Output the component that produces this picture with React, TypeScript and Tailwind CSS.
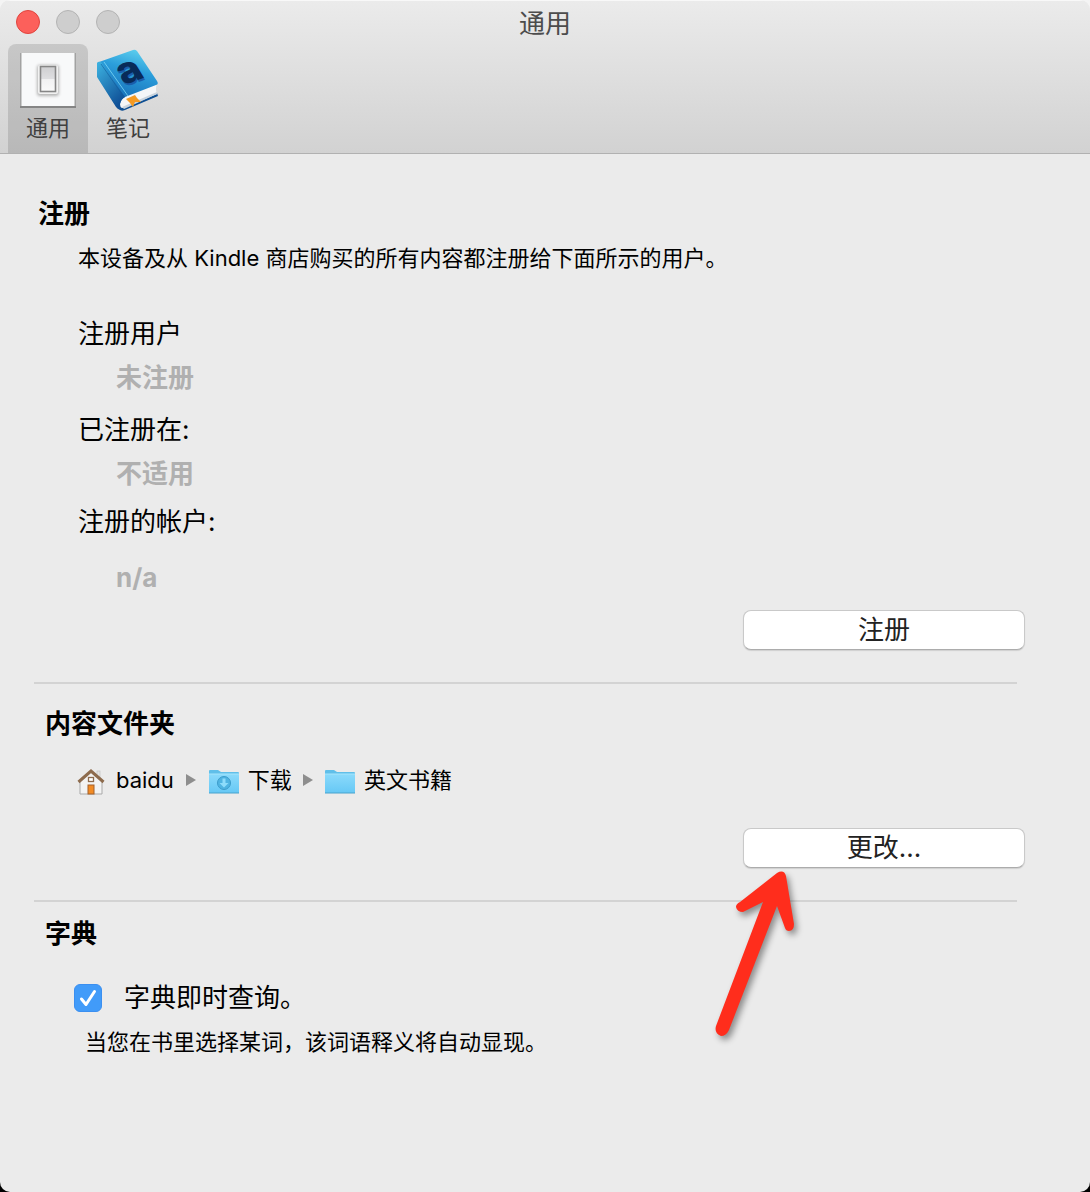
import { useState } from 'react'
import type { ReactNode } from 'react'

function SwitchIcon() {
  return (
    <svg width="56" height="56" viewBox="0 0 56 56" aria-hidden="true">
      <defs>
        <linearGradient id="rocker" x1="0" y1="0" x2="0" y2="1">
          <stop offset="0" stopColor="#cfcfd1" />
          <stop offset="0.48" stopColor="#dedee0" />
          <stop offset="0.5" stopColor="#f1f1f2" />
          <stop offset="1" stopColor="#fafafa" />
        </linearGradient>
        <filter id="plateShade" x="-50%" y="-50%" width="200%" height="200%">
          <feGaussianBlur stdDeviation="1.4" />
        </filter>
      </defs>
      <rect x="0" y="1" width="56" height="55" fill="#a2a2a2" />
      <rect x="1.500" y="1" width="53" height="53" fill="#f8f9fa" />
      <rect x="0" y="54" width="56" height="2" fill="#858585" />
      <rect x="17" y="13" width="22" height="31" rx="3" fill="#b4b4b4" filter="url(#plateShade)" />
      <rect x="18" y="13" width="20" height="29" rx="2" fill="#f1f1f1" />
      <rect x="20.500" y="14.500" width="15" height="25" fill="url(#rocker)" stroke="#868686" strokeWidth="1.600" />
    </svg>
  )
}

function BookIcon() {
  return (
    <svg className="overflow-visible" width="64" height="64" viewBox="-1 -2 64 64" aria-hidden="true">
      <defs>
        <linearGradient id="cover" x1="0.7" y1="0" x2="0.4" y2="1">
          <stop offset="0" stopColor="#5fd0ee" />
          <stop offset="0.35" stopColor="#2b9edb" />
          <stop offset="1" stopColor="#1262ae" />
        </linearGradient>
        <linearGradient id="spine" x1="0" y1="0" x2="0.6" y2="1">
          <stop offset="0" stopColor="#3db4e2" />
          <stop offset="1" stopColor="#0f4f96" />
        </linearGradient>
      </defs>
      <path d="M25 55 L60 43 L61 46 L28 60 Q24 62 22 59 Z" fill="#0e4f93" />
      <path d="M25 46 L60 33 Q58 39 60 44 L27 58 Q22 59 23 51 Z" fill="#f4f6f8" />
      <path d="M25 57 L60 42 L60 44 L27 59 Z" fill="#c9d3dc" />
      <path d="M2 12 L36 0 Q38 -1 40 1 L60 31 Q62 34 59 35 L28 47 Q24 49 23 54 L23 58 L21 58 L1 27 Z" fill="url(#cover)" />
      <path d="M0 13 Q1 11 4 12 L28 47 Q24 49 23 54 L24 60 Q21 60 19 57 L0 27 Z" fill="url(#spine)" />
      <path d="M7 12 L31 46" stroke="#7cd8f5" strokeWidth="1" opacity="0.8" />
      <path d="M4 14 L27 47" stroke="#0f5c9f" strokeWidth="1" opacity="0.6" />
      <path d="M29 49 L38 45 L40 48 L44 52 L38 52 L36 57 L33 53 Z" fill="#f59a22" />
      <text transform="matrix(0.94 -0.34 0.5 0.82 28 37)" fill="#1a5eaa" fontFamily="Inter, sans-serif" fontSize="40" fontWeight="800">a</text>
      <text transform="matrix(0.94 -0.34 0.5 0.82 27 35)" fill="#082b59" fontFamily="Inter, sans-serif" fontSize="40" fontWeight="800">a</text>
    </svg>
  )
}

function HomeIcon() {
  return (
    <svg className="mt-1" width="28" height="28" viewBox="0 0 28 28" aria-hidden="true">
      <rect x="20" y="3" width="3" height="7" fill="#e4e4e4" stroke="#bcbcbc" strokeWidth="0.600" />
      <path d="M3 13 L14 4 L25 13 V26 H3 Z" fill="#f3f3f3" stroke="#a9a9a9" strokeWidth="1" />
      <path d="M1.500 14 L14 3 L26.500 14" fill="none" stroke="#8d6b4d" strokeWidth="3" />
      <rect x="11.500" y="9.500" width="5" height="4" fill="#fff" stroke="#8d6b4d" strokeWidth="1.300" />
      <rect x="11" y="17" width="6" height="9" fill="#f28b24" stroke="#a3602a" strokeWidth="1" />
    </svg>
  )
}

function FolderIcon({ download = false }: { download?: boolean }) {
  return (
    <svg className="mt-1" width="32" height="28" viewBox="0 0 32 28" aria-hidden="true">
      <defs>
        <linearGradient id="folder" x1="0" y1="0" x2="0" y2="1">
          <stop offset="0" stopColor="#8bdafb" />
          <stop offset="1" stopColor="#66c8f5" />
        </linearGradient>
      </defs>
      <path d="M1 25 V3 Q1 2 2 2 H10 L13 4 H30 Q31 4 31 5 V25 Z" fill="#60bfe9" />
      <path d="M1 6 H31 V24 Q31 25 30 25 H2 Q1 25 1 24 Z" fill="url(#folder)" />
      <path d="M1 25 H31" stroke="#49a3cd" strokeWidth="1" />
      <path d="M1 6 H31" stroke="#a6e5fc" strokeWidth="1" />
      {download && (
        <>
          <circle cx="16" cy="15" r="6.500" fill="#4fb4e2" stroke="#3c9ccb" strokeWidth="1" />
          <path d="M14.500 10.500 H17.500 V15 H20.500 L16 19.500 L11.500 15 H14.500 Z" fill="#8ddcfb" />
        </>
      )}
    </svg>
  )
}

function PathArrow() {
  return (
    <svg width="10" height="12" viewBox="0 0 10 12" aria-hidden="true">
      <path d="M0 0 L10 6 L0 12 Z" fill="#8e8e8e" />
    </svg>
  )
}

function PointerArrow() {
  return (
    <svg
      className="pointer-events-none absolute -left-11 top-8 drop-shadow-[3px_4px_3px_rgba(0,0,0,0.4)]"
      width="110"
      height="190"
      viewBox="699 859 110 190"
      aria-hidden="true"
    >
      <path
        d="M777 872 Q784 868 786 875 L794 923 Q794 930 789 930 Q786 930 785 927 L777 905 L729 1029 Q726 1035 721 1035 Q714 1032 716 1025 L763 901 L743 911 Q737 911 736 906 Q736 903 740 901 Z"
        fill="#ff2d1c"
      />
    </svg>
  )
}

function Tab({ label, active, onClick, children }: { label: string; active: boolean; onClick: () => void; children: ReactNode }) {
  return (
    <button
      type="button"
      role="tab"
      aria-selected={active}
      onClick={onClick}
      className={`flex w-20 flex-col items-center rounded-t-lg text-[22px] leading-6 text-[#404040] ${active ? 'bg-black/12' : ''}`}
    >
      <span className="flex h-18 items-center">{children}</span>
      {label}
    </button>
  )
}

function PushButton({ children }: { children: ReactNode }) {
  return (
    <button
      type="button"
      className="flex h-10 w-[282px] items-center justify-center rounded-lg border border-[#c9c9c9] border-b-[#acacac] bg-white text-[26px] leading-10 text-[#222] shadow-[0_1px_1px_rgba(0,0,0,0.12)]"
    >
      {children}
    </button>
  )
}

function Field({ label, value, spacing = 'gap-1 pt-3' }: { label: string; value: string; spacing?: string }) {
  return (
    <div className={`flex flex-col ${spacing}`}>
      <dt className="text-[26px] leading-10">{label}</dt>
      <dd className="pl-[38px] text-[26px] font-bold leading-10 text-[#b0b0b0]">{value}</dd>
    </div>
  )
}

export default function App() {
  const [tab, setTab] = useState('general')
  const [lookup, setLookup] = useState(true)

  return (
    <div className="min-h-screen bg-linear-to-b from-[#f4f4f4] from-50% to-black to-50% font-['Inter','Noto_Sans_CJK_SC',sans-serif] text-black">
      <div className="flex min-h-screen flex-col overflow-hidden rounded-[10px] bg-[#ebebeb]">
        <header className="border-b border-[#b1b1b1] bg-linear-to-b from-[#ebebeb] to-[#d2d2d2] px-2 shadow-[inset_0_1px_0_#f8f8f8]">
          <div className="grid h-11 grid-cols-[1fr_auto_1fr] items-center px-2">
            <div className="flex gap-4">
              <button type="button" aria-label="关闭" className="size-6 rounded-full border border-[#e0443e] bg-[#fc605b]" />
              <button type="button" aria-label="最小化" className="size-6 rounded-full border border-[#b3b3b3] bg-[#cecece]" />
              <button type="button" aria-label="缩放" className="size-6 rounded-full border border-[#b3b3b3] bg-[#cecece]" />
            </div>
            <h1 className="pt-1 text-[26px] leading-10 text-[#4c4c4c]">通用</h1>
          </div>
          <div role="tablist" className="flex h-[109px]">
            <Tab label="通用" active={tab === 'general'} onClick={() => setTab('general')}>
              <SwitchIcon />
            </Tab>
            <Tab label="笔记" active={tab === 'notes'} onClick={() => setTab('notes')}>
              <BookIcon />
            </Tab>
          </div>
        </header>

        <main className="flex flex-col pl-[34px] pr-[65px]">
          <section className="flex flex-col pb-8 pt-10">
            <h2 className="pl-1 text-[26px] font-bold leading-10">注册</h2>
            <p className="pl-11 pt-2 text-[22px] leading-8">本设备及从 Kindle 商店购买的所有内容都注册给下面所示的用户。</p>
            <dl className="flex flex-col pl-11 pt-7">
              <Field label="注册用户" value="未注册" />
              <Field label="已注册在:" value="不适用" />
              <Field label="注册的帐户:" value="n/a" spacing="gap-4 pt-2" />
            </dl>
            <div className="flex justify-end pt-3">
              <PushButton>注册</PushButton>
            </div>
          </section>

          <hr className="mr-2 border-t-2 border-[#d3d3d3]" />

          <section className="flex flex-col pb-8 pl-[11px] pt-5">
            <h2 className="text-[26px] font-bold leading-10">内容文件夹</h2>
            <nav aria-label="内容文件夹" className="flex items-center pl-8 pt-5 text-[22px] leading-8">
              <HomeIcon />
              <span className="pl-[11px]">baidu</span>
              <span className="px-3"><PathArrow /></span>
              <FolderIcon download />
              <span className="pl-2">下载</span>
              <span className="px-[11px]"><PathArrow /></span>
              <FolderIcon />
              <span className="pl-2">英文书籍</span>
            </nav>
            <div className="flex justify-end pt-8">
              <div className="relative">
                <PushButton>更改...</PushButton>
                <PointerArrow />
              </div>
            </div>
          </section>

          <hr className="mr-2 border-t-2 border-[#d3d3d3]" />

          <section className="flex flex-col pl-[11px] pt-3">
            <h2 className="text-[26px] font-bold leading-10">字典</h2>
            <label className="flex items-center gap-[22px] pl-[29px] pt-6 text-[26px] leading-10">
              <span className="relative flex size-7">
                <input
                  type="checkbox"
                  checked={lookup}
                  onChange={(e) => setLookup(e.target.checked)}
                  className="peer size-7 appearance-none rounded-md border border-[#b5b5b5] bg-white checked:border-[#3b8ff0] checked:bg-[#419bf9]"
                />
                <svg className="pointer-events-none absolute inset-0 hidden peer-checked:block" width="28" height="28" viewBox="0 0 28 28" aria-hidden="true">
                  <path d="M7.500 15 L12 20.500 L20.500 7.500" fill="none" stroke="#fff" strokeWidth="3" strokeLinecap="round" strokeLinejoin="round" />
                </svg>
              </span>
              字典即时查询。
            </label>
            <p className="pl-10 pt-2 text-[22px] leading-8">当您在书里选择某词，该词语释义将自动显现。</p>
          </section>
        </main>
      </div>
    </div>
  )
}
